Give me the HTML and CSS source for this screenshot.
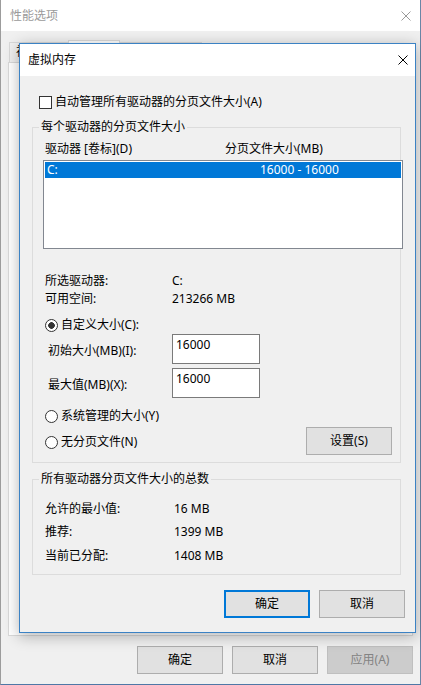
FILE: index.html
```html
<!DOCTYPE html>
<html lang="zh-CN">
<head>
<meta charset="utf-8">
<title>虚拟内存</title>
<link rel="stylesheet" href="styles.css">
</head>
<body>
<div class="window">
  <div class="titlebar">
    <span class="wtitle">性能选项</span>
    <svg class="xicon" width="10" height="10" viewBox="0 0 10 10"><path d="M0.5 0.5 L9.5 9.5 M9.5 0.5 L0.5 9.5" stroke="#9a9a9a" stroke-width="1" fill="none"/></svg>
  </div>
  <div class="wbody">
    <div class="tabs">
      <div class="tab t1">视觉效果</div>
      <div class="tab t2 active">高级</div>
      <div class="tab t3">数据执行保护</div>
    </div>
    <div class="panel"></div>
    <div class="btnrow outer">
      <div class="btn">确定</div>
      <div class="btn">取消</div>
      <div class="btn disabled">应用(A)</div>
    </div>
  </div>

  <div class="dialog">
    <div class="dtitle">
      <span>虚拟内存</span>
      <svg class="xicon" width="10" height="10" viewBox="0 0 10 10"><path d="M0.5 0.5 L9.5 9.5 M9.5 0.5 L0.5 9.5" stroke="#000" stroke-width="1" fill="none"/></svg>
    </div>
    <div class="dbody">
      <div class="check-row"><span class="checkbox"></span><span>自动管理所有驱动器的分页文件大小(A)</span></div>
      <fieldset class="group g1">
        <legend>每个驱动器的分页文件大小</legend>
        <div class="cols head"><span class="c1">驱动器 [卷标](D)</span><span>分页文件大小(MB)</span></div>
        <div class="listbox">
          <div class="item sel"><span class="c1">C:</span><span>16000 - 16000</span></div>
        </div>
        <div class="info first"><span class="c1">所选驱动器:</span><span>C:</span></div>
        <div class="info"><span class="c1">可用空间:</span><span>213266 MB</span></div>
        <div class="radio-row first"><span class="radio on"></span><span>自定义大小(C):</span></div>
        <div class="field first"><span class="flabel">初始大小(MB)(I):</span><div class="input">16000</div></div>
        <div class="field"><span class="flabel">最大值(MB)(X):</span><div class="input">16000</div></div>
        <div class="radio-row sys"><span class="radio"></span><span>系统管理的大小(Y)</span></div>
        <div class="last-row">
          <div class="radio-row low"><span class="radio"></span><span>无分页文件(N)</span></div>
          <div class="btn">设置(S)</div>
        </div>
      </fieldset>
      <fieldset class="group g2">
        <legend>所有驱动器分页文件大小的总数</legend>
        <div class="sum"><span class="c1">允许的最小值:</span><span>16 MB</span></div>
        <div class="sum s2"><span class="c1">推荐:</span><span>1399 MB</span></div>
        <div class="sum s3"><span class="c1">当前已分配:</span><span>1408 MB</span></div>
      </fieldset>
      <div class="btnrow dlg">
        <div class="btn default">确定</div>
        <div class="btn">取消</div>
      </div>
    </div>
  </div>
</div>
</body>
</html>
```

FILE: styles.css
```css
* { box-sizing: border-box; }
html, body { margin: 0; padding: 0; }
body {
  font-family: "Noto Sans", "Noto Sans CJK SC", sans-serif;
  font-size: 12px;
  line-height: 16px;
  color: #000;
  background: #f0f0f0;
}
.window {
  position: relative;
  width: 421px;
  height: 685px;
  background: #f0f0f0;
  border-left: 1px solid #9c9c9c;
  border-right: 1px solid #6a86a6;
  border-bottom: 1px solid #4f78a6;
}
.titlebar {
  height: 31px;
  background: #fff;
  display: flex;
  align-items: center;
  justify-content: space-between;
  padding: 0 9px 0 9px;
}
.wtitle { color: #9a9a9a; }
.xicon { display: block; }
.wbody { padding: 0 7px; }
.tabs {
  margin-top: 9px;
  height: 22px;
  display: flex;
  align-items: flex-end;
  position: relative;
  z-index: 1;
}
.tab {
  height: 20px;
  border: 1px solid #d9d9d9;
  border-bottom: none;
  background: #f0f0f0;
  padding-left: 6px;
  line-height: 18px;
  white-space: nowrap;
  overflow: hidden;
}
.t1 { margin-left: 1px; width: 59px; }
.t2 { width: 52px; height: 23px; background: #fff; margin-bottom: -1px; }
.t3 { width: 82px; border-left: none; }
.panel {
  height: 574px;
  border: 1px solid #d9d9d9;
  background: #fff;
}
.btnrow { display: flex; justify-content: flex-end; gap: 9px; }
.btnrow.outer { margin-top: 10px; }
.btn {
  width: 86px;
  height: 28px;
  border: 1px solid #adadad;
  background: #e1e1e1;
  display: flex;
  align-items: center;
  justify-content: center;
}
.btn.disabled { background: #cccccc; border-color: #bfbfbf; color: #838383; }
.btn.default { border: 2px solid #0078d7; }

.dialog {
  position: absolute;
  z-index: 5;
  left: 18px;
  top: 43px;
  width: 397px;
  height: 590px;
  border: 1px solid #3b82c4;
  background: #f0f0f0;
  box-shadow: 0 3px 14px rgba(0, 0, 0, 0.3);
  display: flex;
  flex-direction: column;
}
.dtitle {
  height: 32px;
  background: #fff;
  padding: 0 7px 0 8px;
  display: flex;
  align-items: center;
  justify-content: space-between;
}
.dbody { padding: 18px 10px 0 12px; }
.check-row {
  display: flex;
  align-items: center;
  gap: 3px;
  height: 16px;
  padding-left: 7px;
}
.checkbox {
  width: 13px;
  height: 13px;
  border: 1px solid #333;
  background: #fff;
}
.group {
  margin: 9px 0 0 0;
  width: 369px;
  min-width: 0;
  border: 1px solid #dcdcdc;
}
.group legend { padding: 0 2px; margin-left: -4px; line-height: 16px; }
.g1 { padding: 6px 0 7px 10px; }
.g2 { margin-top: 8px; padding: 14px 0 10px 10px; }

.cols { display: flex; padding-left: 2px; height: 16px; }
.head .c1 { width: 180px; }
.listbox {
  margin-top: 3px;
  width: 360px;
  height: 89px;
  border: 1px solid #828790;
  background: #fff;
  padding: 1px;
}
.item { height: 16px; display: flex; }
.item.sel { background: #0078d7; color: #fff; }
.item .c1 { width: 215px; padding-left: 2px; }

.info { display: flex; height: 18px; padding-left: 2px; align-items: center; }
.info.first { margin-top: 23px; }
.info .c1 { width: 127px; }

.radio-row {
  display: flex;
  align-items: center;
  gap: 3px;
  height: 16px;
  padding-left: 2px;
}
.radio-row.first { margin-top: 9px; }
.radio-row.sys { margin-top: 10px; }
.radio-row.low { margin-top: 2px; }
.radio {
  width: 13px;
  height: 13px;
  border: 1px solid #333;
  border-radius: 50%;
  background: #fff;
}
.radio.on { background: radial-gradient(circle, #333 0 3px, #fff 3.6px); }

.field { display: flex; align-items: center; margin-top: 4px; }
.field.first { margin-top: 1px; }
.flabel { width: 129px; padding-left: 5px; padding-top: 3px; }
.input {
  width: 88px;
  height: 30px;
  border: 1px solid #7a7a7a;
  background: #fff;
  padding: 2px 3px;
}
.last-row {
  margin-top: 3px;
  height: 28px;
  display: flex;
  align-items: center;
  justify-content: space-between;
  padding-right: 8px;
}

.sum { display: flex; height: 16px; padding-left: 2px; }
.sum .c1 { width: 129px; }
.sum.s2 { margin-top: 7px; }
.sum.s3 { margin-top: 8px; }

.btnrow.dlg { margin-top: 15px; }
```
